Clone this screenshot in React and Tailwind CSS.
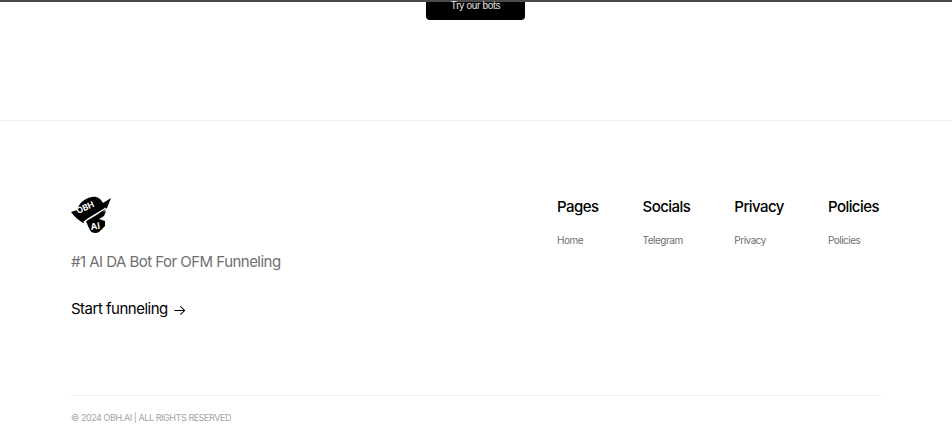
const columns = [
  { title: "Pages", link: "Home" },
  { title: "Socials", link: "Telegram" },
  { title: "Privacy", link: "Privacy" },
  { title: "Policies", link: "Policies" },
];

function Logo() {
  return (
    <svg width="40" height="38" viewBox="0 0 40 38" className="block">
      <path d="M0 16 L6 14 C8 7 14 2 21 1 C26 0 30 3 32 7 L40 2 L36 12 L31 17 C24 19 17 23 12 27 C7 24 3 20 0 16 Z" fill="#000" />
      <path d="M15 25 L31 16 L35 15 L33 20 L28 23 L34 25 L34 30 L28 36 C25 38 20 37 19 34 L17 30 Z" fill="#000" />
      <path d="M13 26 C19 21 26 18 35 12" fill="none" stroke="#fff" strokeWidth="1.4" />
      <text x="7" y="18" fontSize="8.5" fontWeight="700" fill="#fff" fontFamily="Inter" transform="rotate(-24 7 18)">OBH</text>
      <text x="20" y="34" fontSize="9" fontWeight="700" fill="#fff" fontFamily="Inter" transform="rotate(-8 20 34)">AI</text>
    </svg>
  );
}

export default function App() {
  return (
    <div className="w-[952px] h-[446px] overflow-hidden bg-white font-['Inter',sans-serif]">
      <div className="h-[121px] border-t-2 border-b border-t-[#4a4a4a] border-b-[#eeeeee] flex justify-center pr-[1px]">
        <div className="w-[99px] h-[18px] bg-black rounded-b-[4px] flex justify-center">
          <span className="text-[10px] tracking-[-0.3px] leading-[8px] text-[#e5e5e5] font-['Liberation_Sans',sans-serif]">Try our bots</span>
        </div>
      </div>
      <div className="px-[71px] pt-[75px]">
        <div className="flex justify-between h-[200px] border-b border-[#eeeeee]">
          <div>
            <Logo />
            <p className="mt-[16px] text-[15px] tracking-[-0.53px] leading-[24px] text-[#6f6f6f]">#1 AI DA Bot For OFM Funneling</p>
            <div className="mt-[23px] flex items-center gap-[5px] text-[15px] tracking-[-0.5px] leading-[24px] text-black">
              <span>Start funneling</span>
              <svg width="13" height="13" viewBox="0 0 14 14" fill="none" stroke="#000" strokeWidth="1.1" className="mt-[2px]">
                <path d="M1.5 7 H12.5 M8 2.5 L12.5 7 L8 11.5" />
              </svg>
            </div>
          </div>
          <div className="flex gap-[44px] pt-[1px] mr-[2px]">
            {columns.map((c) => (
              <div key={c.title} className="flex flex-col">
                <h3 className="text-[15px] tracking-[-0.55px] leading-[20px] font-medium text-black">{c.title}</h3>
                <a className="mt-[16px] text-[10px] tracking-[-0.5px] leading-[14px] text-[#6f6f6f]">{c.link}</a>
              </div>
            ))}
          </div>
        </div>
        <p className="mt-[16px] text-[9px] tracking-[-0.43px] leading-[12px] text-[#a3a3a3]">© 2024 OBH.AI | ALL RIGHTS RESERVED</p>
      </div>
    </div>
  );
}
